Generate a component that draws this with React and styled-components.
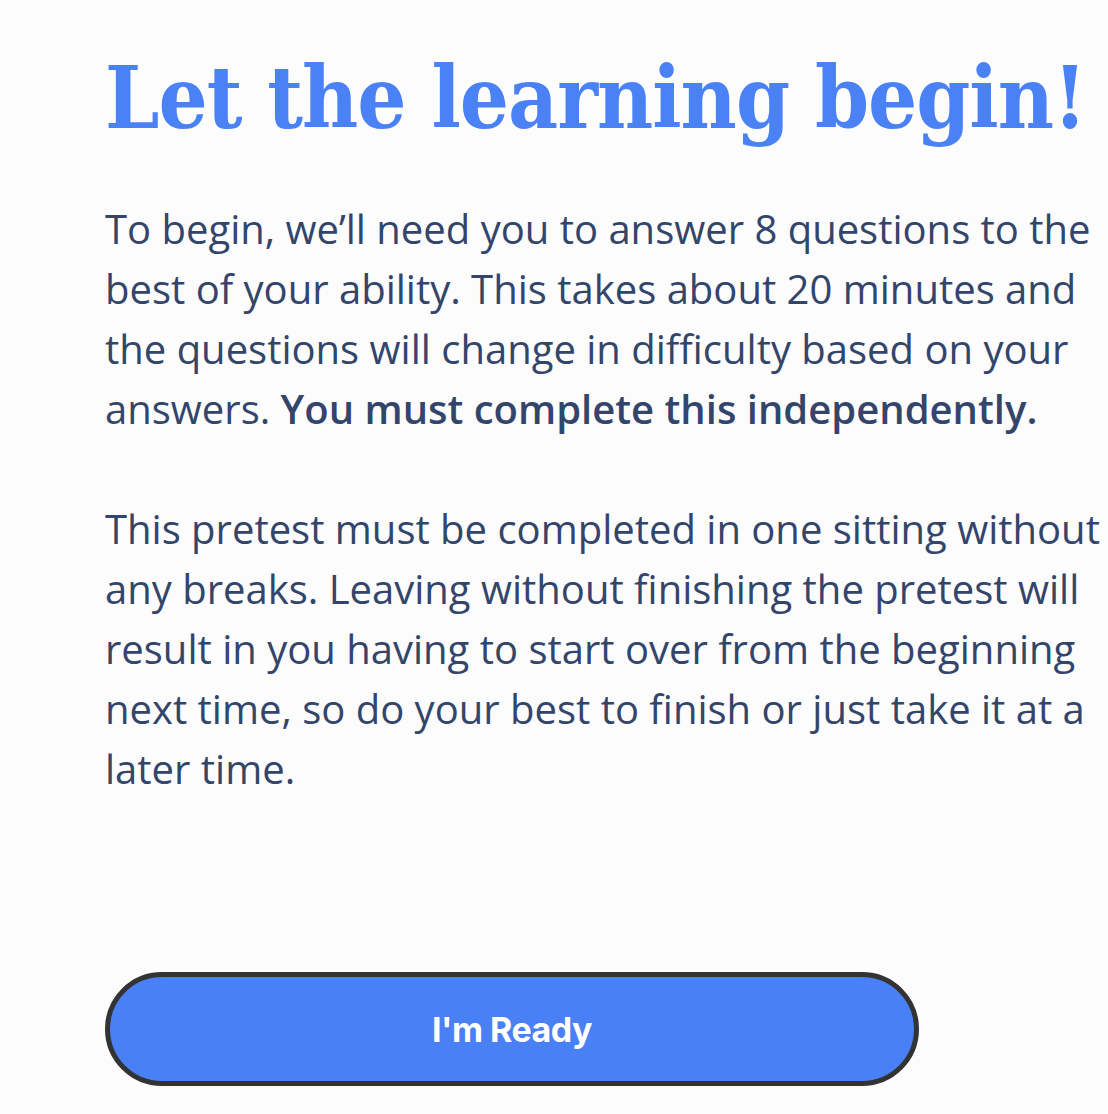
import React from 'react'
import styled, { createGlobalStyle } from 'styled-components'

const GlobalStyle = createGlobalStyle`
  html, body {
    margin: 0;
    padding: 0;
    background: #fcfcfd;
  }
`

const Page = styled.main`
  box-sizing: border-box;
  width: 1108px;
  height: 1114px;
  padding: 48px 0 0 105px;
  overflow: hidden;
`

const Title = styled.h1`
  margin: 0;
  font-family: 'DejaVu Serif Condensed', 'DejaVu Serif', serif;
  font-stretch: condensed;
  font-weight: 700;
  font-size: 86px;
  line-height: 100px;
  letter-spacing: -1px;
  color: #4a82f5;
  white-space: nowrap;
`

const Copy = styled.p`
  margin: ${props => (props.first ? '51px' : '60px')} 0 0;
  width: 1010px;
  font-family: 'Open Sans', sans-serif;
  font-size: 40px;
  line-height: 60px;
  color: #33456a;
`

const Emphasis = styled.strong`
  font-weight: 600;
`

const ReadyButton = styled.button`
  display: block;
  box-sizing: border-box;
  margin-top: 173px;
  width: 814px;
  height: 114px;
  border: 5px solid #333;
  border-radius: 57px;
  background: #4a80f5;
  color: #fff;
  font-family: Inter, 'Liberation Sans', sans-serif;
  font-weight: 700;
  font-size: 34px;
  letter-spacing: -0.5px;
  cursor: pointer;
`

export default function App() {
  return (
    <>
      <GlobalStyle />
      <Page>
        <Title>Let the learning begin!</Title>
        <Copy first>
          To begin, we’ll need you to answer 8 questions to the best of your
          ability. This takes about 20 minutes and the questions will change in
          difficulty based on your answers.{' '}
          <Emphasis>You must complete this independently.</Emphasis>
        </Copy>
        <Copy>
          This pretest must be completed in one sitting without any breaks.
          Leaving without finishing the pretest will result in you having to
          start over from the beginning next time, so do your best to finish or
          just take it at a later time.
        </Copy>
        <ReadyButton>I'm Ready</ReadyButton>
      </Page>
    </>
  )
}
